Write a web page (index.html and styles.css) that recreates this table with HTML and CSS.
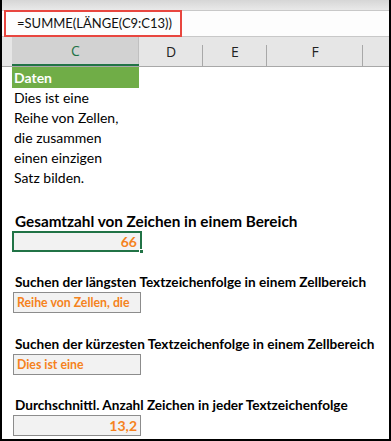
FILE: index.html
```html
<!DOCTYPE html>
<html>
<head>
<meta charset="utf-8">
<link rel="stylesheet" href="styles.css">
</head>
<body>
<div class="frame">
  <div class="topstrip"></div>
  <div class="formulabar">
    <div class="formula">=SUMME(LÄNGE(C9:C13))</div>
  </div>
  <div class="colheads">
    <div class="rowhead"></div>
    <div class="col col-c sel">C</div>
    <div class="col col-d">D</div>
    <div class="col col-e">E</div>
    <div class="col col-f">F</div>
    <div class="col col-g"></div>
  </div>
  <div class="sheet">
    <div class="data">
      <div class="hdr">Daten</div>
      <div class="line">Dies ist eine</div>
      <div class="line">Reihe von Zellen,</div>
      <div class="line">die zusammen</div>
      <div class="line">einen einzigen</div>
      <div class="line">Satz bilden.</div>
    </div>
    <div class="block b1">
      <div class="label big">Gesamtzahl von Zeichen in einem Bereich</div>
      <div class="box active right">66<span class="handle"></span></div>
    </div>
    <div class="block b2">
      <div class="label">Suchen der längsten Textzeichenfolge in einem Zellbereich</div>
      <div class="box">Reihe von Zellen, die</div>
    </div>
    <div class="block b3">
      <div class="label">Suchen der kürzesten Textzeichenfolge in einem Zellbereich</div>
      <div class="box">Dies ist eine</div>
    </div>
    <div class="block b4">
      <div class="label">Durchschnittl. Anzahl Zeichen in jeder Textzeichenfolge</div>
      <div class="box right">13,2</div>
    </div>
  </div>
</div>
</body>
</html>
```
FILE: styles.css
```css
* { box-sizing: border-box; }
html, body { margin: 0; padding: 0; background: #fff; }
body { font-family: Lato, "Open Sans", sans-serif; color: #000; }

.frame {
  width: 391px;
  height: 441px;
  border-left: 2px solid #000;
  border-right: 2px solid #000;
  border-bottom: 2px solid #000;
  overflow: hidden;
  display: flex;
  flex-direction: column;
}

.topstrip {
  height: 10px;
  background: linear-gradient(#d6d6d6, #e9e9e9);
  flex: none;
}

.formulabar {
  height: 27px;
  flex: none;
  background: #fdfdfd;
  border-top: 1px solid #c8c8c8;
  border-bottom: 1px solid #c8c8c8;
  position: relative;
}

.formula {
  position: absolute;
  left: 2px;
  top: -1px;
  width: 178px;
  height: 27px;
  border: 2px solid #e8463f;
  font-size: 13px;
  line-height: 23px;
  padding-left: 11px;
  color: #111;
  white-space: nowrap;
}

.colheads {
  height: 30px;
  flex: none;
  display: flex;
  background: #e6e6e6;
  border-bottom: 1px solid #a8a8a8;
  font-family: "Open Sans", sans-serif;
  font-size: 14px;
}

.rowhead { width: 10px; flex: none; }
.col {
  flex: none;
  text-align: center;
  line-height: 30px;
  color: #222;
  position: relative;
}
.col::after {
  content: "";
  position: absolute;
  right: 0;
  top: 8px;
  bottom: 0;
  width: 1px;
  background: #a8a8a8;
}
.col-c { width: 127px; }
.col-d { width: 64px; }
.col-e { width: 64px; }
.col-f { width: 96px; }
.col-g { flex: 1; }
.col-g::after { display: none; }
.col.sel {
  background: #d2d2d2;
  color: #217346;
  border-bottom: 2px solid #217346;
  line-height: 28px;
}
.col.sel::after { top: 0; background: #c0c0c0; }

.sheet {
  flex: 1;
  padding-left: 10px;
  font-size: 14px;
}

.data { width: 127px; }
.hdr {
  background: #70ad47;
  color: #fff;
  font-weight: bold;
  height: 21px;
  line-height: 21px;
  padding-left: 2px;
}
.line {
  height: 20px;
  line-height: 20px;
  padding-left: 2px;
}

.b1 { margin-top: 23px; }
.b2 { margin-top: 20px; }
.b3 { margin-top: 21px; }
.b4 { margin-top: 20px; }

.label {
  font-weight: bold;
  height: 20px;
  line-height: 20px;
  padding-left: 3px;
  white-space: nowrap;
  font-size: 13.6px;
}
.label.big { font-size: 15.3px; }

.box {
  width: 128px;
  height: 21px;
  line-height: 19px;
  background: #f2f2f2;
  border: 1px solid #8c8c8c;
  color: #f58220;
  font-weight: bold;
  font-size: 12.3px;
  padding: 0 3px;
  margin-left: 1px;
  position: relative;
  white-space: nowrap;
}
.box.right { text-align: right; font-size: 14px; }
.box.active {
  width: 130px;
  margin-left: 0;
  border: 2px solid #217346;
  line-height: 17px;
}
.handle {
  position: absolute;
  right: -4px;
  bottom: -4px;
  width: 5px;
  height: 5px;
  background: #217346;
  border: 1px solid #fff;
}
```
